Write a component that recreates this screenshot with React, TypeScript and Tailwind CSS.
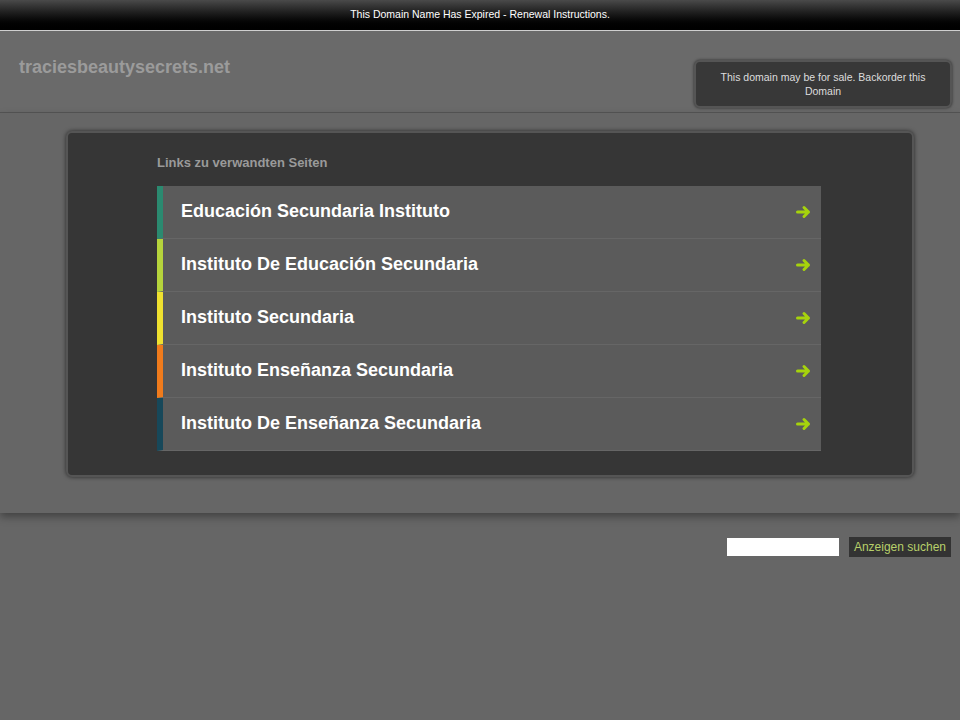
export default function App() {
  const rows = [
    ["Educación Secundaria Instituto", "#2b8a70"],
    ["Instituto De Educación Secundaria", "#b6d43c"],
    ["Instituto Secundaria", "#efe12f"],
    ["Instituto Enseñanza Secundaria", "#f07b1c"],
    ["Instituto De Enseñanza Secundaria", "#17485a"],
  ];
  return (
    <div className="w-[960px] h-[720px] bg-[#666666] overflow-hidden" style={{ fontFamily: "'Liberation Sans', Arial, sans-serif" }}>
      <div className="h-[30px] bg-gradient-to-b from-[#4a4a4a] to-[#000] flex items-center justify-center text-white text-[10.5px] border-b border-[#cfcfcf] box-content">
        This Domain Name Has Expired - Renewal Instructions.
      </div>
      <div className="h-[82px] bg-[#6a6a6a] border-b border-[#555] flex justify-between px-[19px]">
        <div className="pt-[23px] text-[#9b9b9b] text-[18px] font-bold">traciesbeautysecrets.net</div>
        <div className="mt-[29px] mr-[-11px] w-[258px] h-[48px] rounded-[6px] bg-[#383838] border-2 border-[#555] shadow-[0_0_3px_rgba(0,0,0,0.6)] flex items-center justify-center text-center text-[#ddd] text-[10.5px] leading-[14px] px-4">
          This domain may be for sale. Backorder this Domain
        </div>
      </div>
      <div className="h-[400px] bg-[#666] shadow-[0_4px_8px_rgba(0,0,0,0.35)] pt-[18px] pl-[66px]">
        <div className="w-[848px] h-[346px] bg-[#363636] rounded-[6px] border-2 border-[#555] shadow-[0_0_4px_rgba(0,0,0,0.6)] pl-[89px] pt-[20px]">
          <div className="text-[#9a9a9a] text-[13px] font-bold mb-[13px]">Links zu verwandten Seiten</div>
          <div className="w-[664px]">
            {rows.map(([t, c]) => (
              <div key={t} className="h-[53px] bg-[#5b5b5b] border-b border-[#666] flex items-center justify-between pr-[9px]" style={{ borderLeft: `6px solid ${c}` }}>
                <span className="pl-[18px] text-white text-[18px] font-bold">{t}</span>
                <svg width="16" height="14" viewBox="0 0 16 14"><path d="M1.5 7h11M8 2.5l4.5 4.5L8 11.5" stroke="#a6d30c" strokeWidth="3" fill="none" strokeLinecap="round" strokeLinejoin="round"/></svg>
              </div>
            ))}
          </div>
        </div>
      </div>
      <div className="flex justify-end pr-[9px] pt-[24px] gap-[10px]">
        <div className="w-[112px] h-[18px] bg-white mt-[1px]" />
        <div className="h-[20px] bg-[#333] text-[#b8d06a] text-[12px] px-[5px] flex items-center">Anzeigen suchen</div>
      </div>
    </div>
  );
}
